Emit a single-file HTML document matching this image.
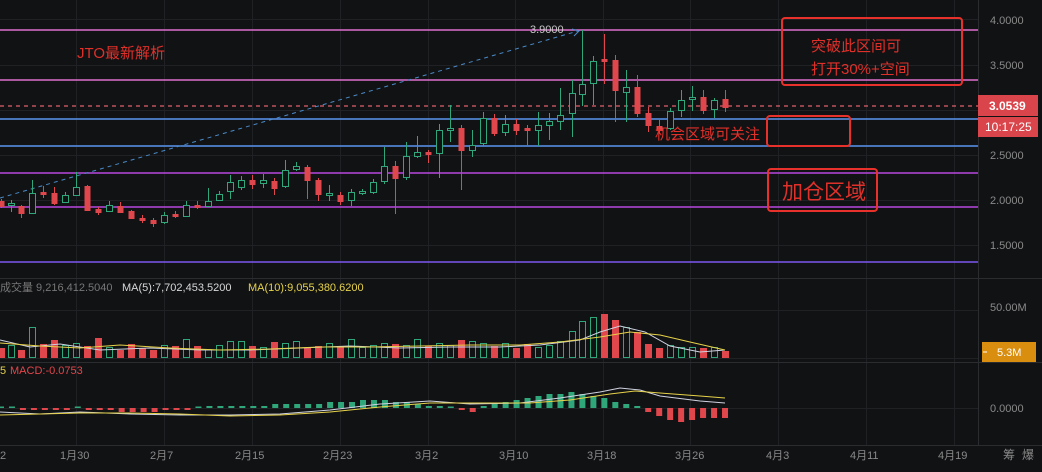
<!DOCTYPE html>
<html><head><meta charset="utf-8">
<style>
html,body{margin:0;padding:0;background:#111214;}
body{width:1042px;height:472px;overflow:hidden;position:relative;font-family:"Liberation Sans","Noto Sans CJK SC",sans-serif;}
svg{position:absolute;left:0;top:0}
</style></head><body>
<svg id="s" width="1042" height="472" xmlns="http://www.w3.org/2000/svg">
<rect width="1042" height="472" fill="#111214"/>
<g id="grid" stroke="#1f2124" stroke-width="1"></g>
<g id="lines"></g>
<g id="candles"></g>
<g id="vol"></g>
<g id="macd"></g>
<g font-family="Liberation Sans, Noto Sans CJK SC, sans-serif">
<text x="77" y="58" fill="#e0302a" font-size="15">JTO最新解析</text>
<text x="530" y="33" fill="#c8c8c8" font-size="11">3.9000</text>
<rect x="782" y="18" width="180" height="67" rx="3" fill="none" stroke="#e8312a" stroke-width="2"/>
<text x="811" y="51" fill="#e0302a" font-size="15">突破此区间可</text>
<text x="811" y="74" fill="#e0302a" font-size="15">打开30%+空间</text>
<rect x="767" y="116" width="83" height="30" rx="3" fill="none" stroke="#e8312a" stroke-width="2"/>
<text x="655" y="139" fill="#e0302a" font-size="15">机会区域可关注</text>
<rect x="768" y="169" width="109" height="42" rx="3" fill="none" stroke="#e8312a" stroke-width="2"/>
<text x="782" y="199" fill="#e0302a" font-size="21">加仓区域</text>
<g fill="#8a8a8a" font-size="11">
<text x="990" y="24">4.0000</text>
<text x="990" y="69">3.5000</text>
<text x="990" y="159">2.5000</text>
<text x="990" y="204">2.0000</text>
<text x="990" y="249">1.5000</text>
<text x="990" y="311">50.00M</text>
<text x="990" y="412">0.0000</text>
</g>
<rect x="978" y="95" width="60" height="21" fill="#d9454b"/>
<text x="989" y="110" fill="#fff" font-size="12" font-weight="bold">3.0539</text>
<rect x="978" y="117" width="60" height="20" fill="#d9454b"/>
<text x="985" y="131" fill="#fff" font-size="12">10:17:25</text>
<rect x="982" y="342" width="54" height="20" fill="#d98e0f"/>
<text x="997" y="356" fill="#fff" font-size="11">5.3M</text>
<line x1="983" y1="352" x2="987" y2="352" stroke="#fff"/>
<text x="0" y="291" fill="#777" font-size="11">成交量 9,216,412.5040</text>
<text x="122" y="291" fill="#d8d8d8" font-size="11">MA(5):7,702,453.5200</text>
<text x="248" y="291" fill="#e6d24a" font-size="11">MA(10):9,055,380.6200</text>
<text x="0" y="374" fill="#e6d24a" font-size="11">5</text>
<text x="10" y="374" fill="#e0474c" font-size="11">MACD:-0.0753</text>
<g fill="#8a8a8a" font-size="11">
<text x="0" y="459">2</text>
<text x="60" y="459">1月30</text>
<text x="150" y="459">2月7</text>
<text x="235" y="459">2月15</text>
<text x="323" y="459">2月23</text>
<text x="415" y="459">3月2</text>
<text x="499" y="459">3月10</text>
<text x="587" y="459">3月18</text>
<text x="675" y="459">3月26</text>
<text x="766" y="459">4月3</text>
<text x="850" y="459">4月11</text>
<text x="938" y="459">4月19</text>
<text x="1003" y="459" font-size="12">筹</text>
<text x="1022" y="459" font-size="12">爆</text>
</g>
</g>
</svg>
<script>
var NS="http://www.w3.org/2000/svg";
function el(p,t,a){var e=document.createElementNS(NS,t);for(var k in a)e.setAttribute(k,a[k]);document.getElementById(p).appendChild(e);return e;}
[76,164,252,340,428,515,603,690,778,866,954].forEach(function(x){el('grid','line',{x1:x+.5,y1:0,x2:x+.5,y2:445});});
[19,65,110,155,200,245,310,358,408].forEach(function(y){el('grid','line',{x1:0,y1:y+.5,x2:978,y2:y+.5});});
el('grid','line',{x1:0,y1:278.5,x2:1042,y2:278.5,stroke:'#2a2c30'});
el('grid','line',{x1:0,y1:362.5,x2:1042,y2:362.5,stroke:'#2a2c30'});
el('grid','line',{x1:0,y1:445.5,x2:1042,y2:445.5,stroke:'#2a2c30'});
el('grid','line',{x1:978.5,y1:0,x2:978.5,y2:445,stroke:'#2a2c30'});
[[30,'#e070d0'],[80,'#e070d0'],[119,'#5a95f0'],[146,'#5a95f0'],[173,'#b848e0'],[207,'#b848e0'],[262,'#7a58f0']].forEach(function(l){el('lines','line',{x1:0,y1:l[0],x2:978,y2:l[0],stroke:l[1],'stroke-width':1.4});});
el('lines','line',{x1:0,y1:106,x2:978,y2:106,stroke:'#e0606a','stroke-width':1.2,'stroke-dasharray':'4 4'});
el('lines','line',{x1:0,y1:198,x2:578,y2:31,stroke:'#4a8ac8','stroke-dasharray':'4 4'});
el('lines','path',{d:'M572,29 L579,31 L574,36',fill:'none',stroke:'#4a8ac8'});
var C=[[1,201,206,199,208,0],[11,203,205,200,212,1],[21,206,213,205,218,0],[32,193,213,180,214,1],[43,192,194,186,198,0],[54,193,203,187,205,0],[65,195,202,192,203,1],[76,187,195,172,196,1],[87,186,210,185,211,0],[98,209,212,207,215,0],[109,205,211,201,212,1],[120,206,212,202,213,0],[131,211,218,210,219,0],[142,218,220,215,223,0],[153,220,223,218,227,0],[164,215,222,212,224,1],[175,214,216,211,218,0],[186,205,216,201,217,1],[197,205,207,201,209,0],[208,201,206,188,207,1],[219,194,200,191,201,1],[230,182,191,175,199,1],[241,180,187,176,190,1],[252,180,184,175,189,0],[263,180,183,174,188,1],[274,181,188,178,195,0],[285,170,186,160,188,1],[296,166,169,162,171,1],[307,167,180,165,199,0],[318,180,194,178,201,0],[329,193,195,185,201,1],[340,195,201,192,205,0],[351,192,200,189,206,1],[362,191,193,189,195,1],[373,182,192,179,194,1],[384,166,181,147,184,1],[395,166,178,161,214,0],[406,156,177,142,180,1],[417,152,156,136,158,1],[428,152,154,150,163,0],[439,130,153,124,178,1],[450,128,130,105,142,1],[461,128,150,125,190,0],[472,145,150,130,157,1],[483,118,143,112,146,1],[494,118,133,114,136,0],[505,124,132,115,136,1],[516,124,130,119,135,0],[527,128,130,125,146,0],[538,125,130,112,146,1],[549,121,125,113,140,1],[560,115,121,88,130,1],[572,93,113,80,137,1],[582,84,94,30,106,1],[593,61,83,56,105,1],[604,59,61,34,84,0],[615,60,90,55,122,0],[626,87,92,70,122,1],[637,87,113,75,117,0],[648,113,125,107,132,0],[659,126,130,120,134,0],[670,111,128,108,130,1],[681,100,110,90,117,1],[692,97,99,86,111,1],[703,97,110,90,114,0],[714,100,109,98,118,1],[725,99,107,90,112,0]];
var G='#2fa77a',R='#e0474c';
var V=[10,12,8,30,14,18,12,14,12,20,10,8,14,10,8,12,12,18,12,8,12,16,16,12,10,16,14,16,10,12,14,12,18,10,12,14,14,12,18,12,14,12,18,16,14,12,14,10,14,10,12,16,26,36,40,44,38,30,26,14,10,12,10,10,10,10,7];
C.forEach(function(c,i){
 var col=c[5]?G:R;
 el('candles','line',{x1:c[0]+.5,y1:c[3],x2:c[0]+.5,y2:c[4],stroke:col});
 var h=Math.max(c[2]-c[1],1);
 if(c[5])el('candles','rect',{x:c[0]-2.5,y:c[1]+.5,width:6,height:h,fill:'#111214',stroke:col});
 else el('candles','rect',{x:c[0]-2.5,y:c[1],width:6,height:h+1,fill:col});
 var v=V[i]||10;
 if(c[5])el('vol','rect',{x:c[0]-2.5,y:357.5-v,width:6,height:v,fill:'none',stroke:G});
 else el('vol','rect',{x:c[0]-3,y:358-v,width:7,height:v,fill:R});
});
for(var i=0;i<67;i++){var x=1+i*10.97;var m=[0,0,-1,-1,-1,-1,-1,0,-1,-1,-1,-2,-2,-2,-2,-1,-1,-1,0,1,1,1,1,1,1,2,2,2,2,2,3,3,3,4,4,4,3,3,2,1,1,0,-1,-2,1,2,3,4,5,6,7,7,8,7,6,5,3,2,1,-2,-4,-6,-7,-6,-5,-5,-5][i];
 var x0=x-3;
 if(m>=0){var h=Math.max(m*2,1.5);el('macd','rect',{x:x0,y:408-h,width:6,height:h,fill:'#2fa77a'});}
 else{var h=-m*2;el('macd','rect',{x:x0,y:408,width:6,height:h,fill:R});}
}
el('vol','polyline',{points:'0,340 30,347 60,344 100,350 150,348 200,350 250,350 300,348 350,346 400,348 450,347 500,347 540,345 580,340 600,332 620,326 645,332 670,346 700,352 725,350',fill:'none',stroke:'#cfd2e0','stroke-width':1});
el('vol','polyline',{points:'0,343 40,346 80,348 120,345 170,348 220,350 270,349 320,347 370,347 420,346 470,345 520,345 560,342 600,337 630,332 660,335 690,342 725,350',fill:'none',stroke:'#e6d24a','stroke-width':1});
el('macd','polyline',{points:'0,412 40,414 80,412 130,414 180,415 230,415 280,414 330,410 380,404 430,401 470,404 520,403 560,398 600,392 620,388 640,390 660,396 700,401 725,403',fill:'none',stroke:'#cfd2e0','stroke-width':1});
el('macd','polyline',{points:'0,415 40,414 80,413 130,413 180,414 230,416 280,415 330,412 380,407 430,403 480,403 530,403 570,400 610,394 635,391 660,393 700,396 725,398',fill:'none',stroke:'#e6d24a','stroke-width':1});
</script>
</body></html>
